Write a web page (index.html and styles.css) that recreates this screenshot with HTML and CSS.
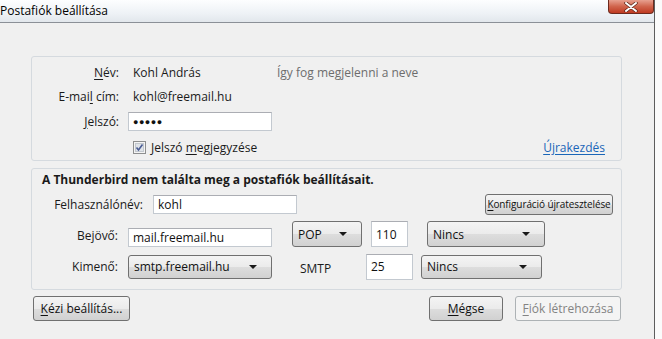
FILE: index.html
```html
<!DOCTYPE html>
<html lang="hu">
<head>
    <meta charset="UTF-8">
    <title>Postafiók beállítása</title>
    <link rel="stylesheet" href="styles.css">
</head>
<body>

    <div class="window">
        <div class="titlebar">
            <span class="title">Postafiók beállítása</span>
            <span class="close">
                <svg width="16" height="10" viewBox="0 0 16 10">
                    <path d="M3 1 L13 9 M13 1 L3 9" stroke="#5a2418" stroke-width="3.4" stroke-linecap="round"/>
                    <path d="M3 1 L13 9 M13 1 L3 9" stroke="#fff" stroke-width="2" stroke-linecap="round"/>
                </svg>
            </span>
        </div>

        <div class="content">
            <div class="group identity">
                <div class="row">
                    <label class="lbl"><u>N</u>év:</label>
                    <span class="val">Kohl András</span>
                    <span class="hint">Így fog megjelenni a neve</span>
                </div>
                <div class="row">
                    <label class="lbl">E-mai<u>l</u> cím:</label>
                    <span class="val">kohl@freemail.hu</span>
                </div>
                <div class="row row-pass">
                    <label class="lbl"><u>J</u>elszó:</label>
                    <span class="input pass">●●●●●</span>
                </div>
                <div class="row row-check">
                    <span class="lbl"></span>
                    <span class="checkbox">
                        <svg width="13" height="13" viewBox="0 0 13 13">
                            <rect x="0.5" y="0.5" width="12" height="12" fill="#f4f4f4" stroke="#8e8f8f"/>
                            <rect x="2.5" y="2.5" width="8" height="8" fill="#dfe3e8" stroke="#c3c8ce"/>
                            <path d="M3.5 6.5 L5.5 9 L9.5 3.5" fill="none" stroke="#4a5c94" stroke-width="1.6"/>
                        </svg>
                    </span>
                    <span class="check-text">Jelszó <u>m</u>egjegyzése</span>
                    <a class="link" href="#">Újrakezdés</a>
                </div>
            </div>

            <div class="group config">
                <div class="notice">A Thunderbird nem találta meg a postafiók beállításait.</div>
                <div class="row row-user">
                    <label class="lbl lbl-wide">Felhasználónév:</label>
                    <span class="input user">kohl</span>
                    <span class="btn btn-small"><u>K</u>onfiguráció újratesztelése</span>
                </div>
                <div class="row row-in">
                    <label class="lbl lbl-server">Bejövő:</label>
                    <span class="input host">mail.freemail.hu</span>
                    <span class="select proto">POP<i class="arrow"></i></span>
                    <span class="input port">110</span>
                    <span class="select sec">Nincs<i class="arrow"></i></span>
                </div>
                <div class="row row-out">
                    <label class="lbl lbl-server">Kimenő:</label>
                    <span class="select host-out">smtp.freemail.hu<i class="arrow"></i></span>
                    <span class="proto-text">SMTP</span>
                    <span class="input port-out">25</span>
                    <span class="select sec-out">Nincs<i class="arrow"></i></span>
                </div>
            </div>

            <div class="actions">
                <span class="btn manual"><u>K</u>ézi beállítás...</span>
                <span class="btn cancel"><u>M</u>égse</span>
                <span class="btn create disabled"><u>F</u>iók létrehozása</span>
            </div>
        </div>
    </div>

</body>
</html>
```

FILE: styles.css
```css
body {
    margin: 0;
    background: #fbfbfb;
    font-family: "Open Sans", "Noto Sans", sans-serif;
    font-size: 12px;
    color: #1a1a1a;
}
u {
    text-decoration: underline;
    text-underline-offset: 2px;
}
.window {
    width: 654px;
    height: 339px;
    border-right: 1px solid #5d5d5d;
    background: #f0f0f0;
}

/* Title bar */
.titlebar {
    height: 22px;
    display: flex;
    justify-content: space-between;
    align-items: flex-start;
    background: linear-gradient(#fdfeff, #eef2f6 60%, #e2e7ec);
    border-bottom: 1px solid #8b9097;
}
.title {
    line-height: 21px;
    font-size: 12px;
    color: #000;
}
.close {
    width: 46px;
    height: 14px;
    display: flex;
    align-items: center;
    justify-content: center;
    background: linear-gradient(#e7a08f, #d0644c 50%, #bf3a22);
    border: 1px solid #6d2a1e;
    border-top: none;
    border-radius: 0 0 4px 4px;
    box-sizing: border-box;
}

.content {
    padding: 33px 0 0 31px;
}

/* Group boxes */
.group {
    width: 591px;
    box-sizing: border-box;
    border: 1px solid #d5dadf;
    border-radius: 3px;
}
.identity {
    height: 105px;
    padding-top: 3px;
}
.config {
    height: 122px;
    margin-top: 7px;
    padding-top: 1px;
}
.row {
    display: flex;
    align-items: center;
    height: 24px;
}
.lbl {
    width: 87px;
    margin-right: 9px;
    text-align: right;
    flex-shrink: 0;
}
.val {
    padding-left: 5px;
    width: 139px;
}
.hint {
    padding-left: 5px;
    color: #6d6d6d;
}
.row-pass {
    height: 26px;
}
.row-check {
    margin-top: 1px;
    height: 24px;
}
.checkbox {
    display: flex;
    margin-left: 5px;
    margin-right: 5px;
}
.link {
    margin-left: auto;
    margin-right: 16px;
    color: #1a66b8;
    text-decoration: underline;
    text-underline-offset: 2px;
}

/* Inputs and controls */
.input {
    display: flex;
    align-items: center;
    box-sizing: border-box;
    height: 19px;
    padding-left: 4px;
    background: #fff;
    border: 1px solid #c3c9d0;
    border-top-color: #abadb3;
    color: #111;
}
.pass {
    width: 144px;
    font-size: 9px;
    letter-spacing: 0.5px;
}
.select, .btn {
    display: flex;
    align-items: center;
    box-sizing: border-box;
    border: 1px solid #707070;
    border-radius: 3px;
    background: linear-gradient(#f4f4f4, #ebebeb 50%, #dddddd 51%, #d1d1d1);
    color: #111;
}
.select {
    position: relative;
    padding-left: 5px;
}
.arrow {
    position: absolute;
    right: 14px;
    top: 50%;
    margin-top: -2px;
    border-left: 4px solid transparent;
    border-right: 4px solid transparent;
    border-top: 4px solid #1a1a1a;
}
.btn {
    justify-content: center;
}

.notice {
    font-weight: bold;
    line-height: 20px;
    padding-left: 10px;
    margin-bottom: 2px;
}
.lbl-wide {
    width: 111px;
    margin-right: 10px;
}
.lbl-server {
    width: 86px;
    margin-right: 10px;
}
.user {
    width: 144px;
}
.btn-small {
    margin-left: auto;
    margin-right: 8px;
    height: 21px;
    width: 128px;
    font-size: 10px;
    letter-spacing: -0.1px;
}
.row-in {
    margin-top: 5px;
    height: 26px;
    align-items: flex-end;
}
.row-in .lbl {
    align-self: center;
    margin-top: 2px;
}
.host {
    width: 144px;
}
.proto {
    margin-left: 20px;
    width: 70px;
    height: 26px;
}
.port {
    margin-left: 9px;
    width: 37px;
    height: 26px;
    align-self: flex-end;
}
.sec {
    margin-left: 19px;
    width: 118px;
    height: 26px;
}
.row-out {
    margin-top: 6px;
    height: 27px;
}
.host-out {
    width: 144px;
    height: 24px;
}
.proto-text {
    margin-left: 28px;
    width: 66px;
    padding-top: 3px;
}
.port-out {
    width: 47px;
    height: 26px;
}
.sec-out {
    margin-left: 8px;
    width: 121px;
    height: 24px;
}

/* Bottom buttons */
.actions {
    display: flex;
    width: 588px;
    margin-top: 6px;
    padding-left: 2px;
}
.actions .btn {
    height: 25px;
    font-size: 12px;
}
.manual {
    width: 97px;
}
.cancel {
    width: 74px;
    margin-left: auto;
}
.create {
    width: 106px;
    margin-left: 12px;
}
.disabled {
    background: #f4f4f4;
    border-color: #adb2b5;
    color: #838383;
}
```
